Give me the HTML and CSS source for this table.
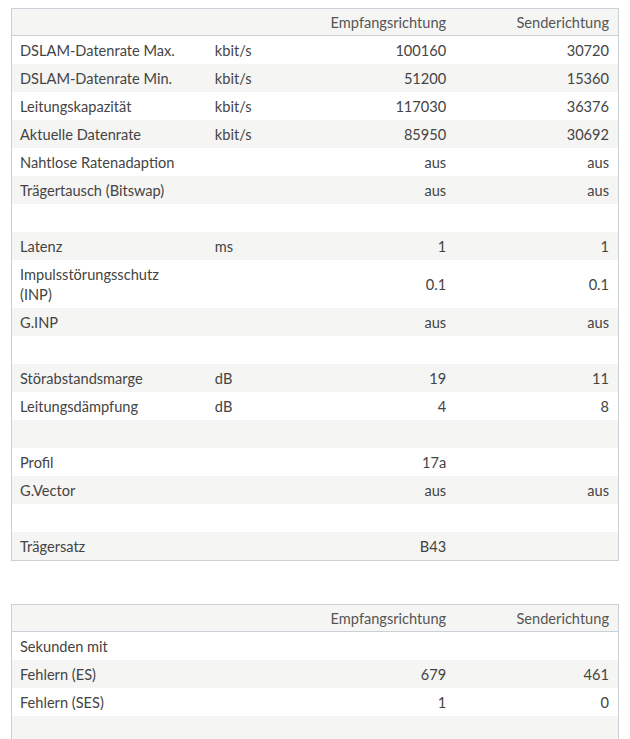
FILE: index.html
```html
<!DOCTYPE html>
<html lang="de">
<head>
<meta charset="utf-8">
<title>DSL-Informationen</title>
<link rel="stylesheet" href="styles.css">
</head>
<body>
<div class="page">
<table class="dsl">
  <colgroup><col class="c-label"><col class="c-unit"><col class="c-rx"><col class="c-tx"></colgroup>
  <thead>
    <tr><th></th><th></th><th class="num">Empfangsrichtung</th><th class="num">Senderichtung</th></tr>
  </thead>
  <tbody>
    <tr><td>DSLAM-Datenrate Max.</td><td>kbit/s</td><td class="num">100160</td><td class="num">30720</td></tr>
    <tr><td>DSLAM-Datenrate Min.</td><td>kbit/s</td><td class="num">51200</td><td class="num">15360</td></tr>
    <tr><td>Leitungskapazität</td><td>kbit/s</td><td class="num">117030</td><td class="num">36376</td></tr>
    <tr><td>Aktuelle Datenrate</td><td>kbit/s</td><td class="num">85950</td><td class="num">30692</td></tr>
    <tr><td>Nahtlose Ratenadaption</td><td></td><td class="num">aus</td><td class="num">aus</td></tr>
    <tr><td>Trägertausch (Bitswap)</td><td></td><td class="num">aus</td><td class="num">aus</td></tr>
    <tr class="blank"><td></td><td></td><td></td><td></td></tr>
    <tr><td>Latenz</td><td>ms</td><td class="num">1</td><td class="num">1</td></tr>
    <tr><td>Impulsstörungsschutz (INP)</td><td></td><td class="num">0.1</td><td class="num">0.1</td></tr>
    <tr><td>G.INP</td><td></td><td class="num">aus</td><td class="num">aus</td></tr>
    <tr class="blank"><td></td><td></td><td></td><td></td></tr>
    <tr><td>Störabstandsmarge</td><td>dB</td><td class="num">19</td><td class="num">11</td></tr>
    <tr><td>Leitungsdämpfung</td><td>dB</td><td class="num">4</td><td class="num">8</td></tr>
    <tr class="blank"><td></td><td></td><td></td><td></td></tr>
    <tr><td>Profil</td><td></td><td class="num">17a</td><td class="num"></td></tr>
    <tr><td>G.Vector</td><td></td><td class="num">aus</td><td class="num">aus</td></tr>
    <tr class="blank"><td></td><td></td><td></td><td></td></tr>
    <tr><td>Trägersatz</td><td></td><td class="num">B43</td><td class="num"></td></tr>
  </tbody>
</table>

<table class="dsl errors">
  <colgroup><col class="c-label"><col class="c-unit"><col class="c-rx"><col class="c-tx"></colgroup>
  <thead>
    <tr><th></th><th></th><th class="num">Empfangsrichtung</th><th class="num">Senderichtung</th></tr>
  </thead>
  <tbody>
    <tr><td>Sekunden mit</td><td></td><td class="num"></td><td class="num"></td></tr>
    <tr><td>Fehlern (ES)</td><td></td><td class="num">679</td><td class="num">461</td></tr>
    <tr><td>Fehlern (SES)</td><td></td><td class="num">1</td><td class="num">0</td></tr>
    <tr class="blank"><td></td><td></td><td></td><td></td></tr>
  </tbody>
</table>
</div>
</body>
</html>
```

FILE: styles.css
```css
html, body {
  margin: 0;
  padding: 0;
  background: #ffffff;
}

.page {
  padding: 8px 11px 0 11px;
  font-family: "Lato", "Open Sans", "Liberation Sans", sans-serif;
  font-size: 14.6px;
  color: #444444;
}

.dsl {
  width: 608px;
  border-collapse: collapse;
  table-layout: fixed;
  border: 1px solid #c9d1d6;
}

.dsl + .dsl {
  margin-top: 43px;
}

.c-label { width: 195px; }
.c-unit { width: 93px; }
.c-rx { width: 154px; }
.c-tx { width: 164px; }

.dsl th {
  background: #f5f5f4;
  border-bottom: 1px solid #c9d1d6;
  font-weight: normal;
  color: #555555;
  text-align: left;
  height: 20px;
  padding: 4px 8px 2px 8px;
  line-height: 20px;
  vertical-align: middle;
}

.dsl td {
  padding: 5px 8px 3px 8px;
  line-height: 20px;
  height: 20px;
  vertical-align: middle;
}

.dsl td:first-child {
  padding-right: 24px;
}

.dsl tbody tr:nth-child(even) td {
  background: #f5f5f4;
}

.dsl .num {
  text-align: right;
}

.dsl th.num {
  padding-right: 8px;
}

.dsl td.num:last-child,
.dsl th.num:last-child {
  padding-right: 9px;
}
```
